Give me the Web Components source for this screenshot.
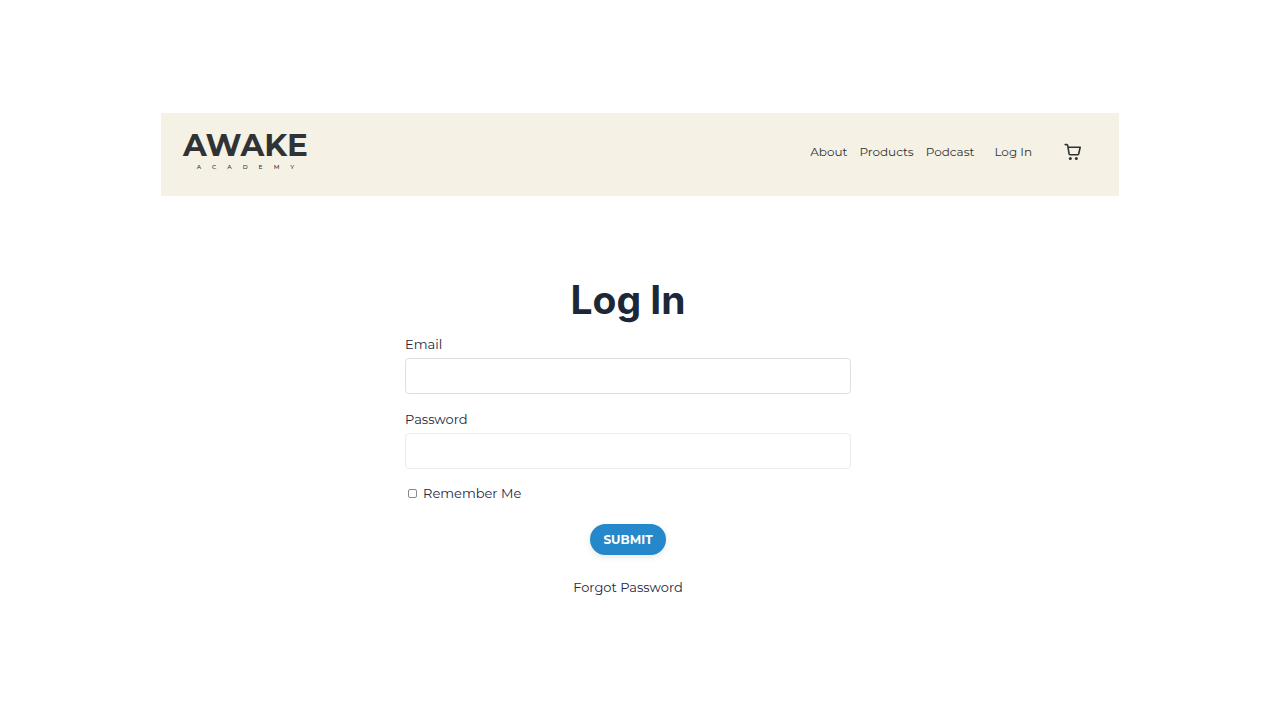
<!DOCTYPE html>
<html lang="en">
<head>
<meta charset="utf-8">
<meta name="viewport" content="width=device-width, initial-scale=1">
<title>Log In | Awake Academy</title>
<style>
  body { margin: 0; background: #fff; color: #1e293b; font-family: Montserrat, Inter, sans-serif; }
</style>
</head>
<body>
<login-page></login-page>

<template id="page-tpl">
  <style>
    :host { display: block; max-width: 958px; margin: 0 auto; padding: 113px 16px 64px; }
    main { display: flex; justify-content: center; padding: 80px 24px 0 0; }
  </style>
  <site-header>
    <nav-link href="#about">About</nav-link>
    <nav-link href="#products">Products</nav-link>
    <nav-link href="#podcast">Podcast</nav-link>
    <nav-link slot="account" href="#login">Log In</nav-link>
  </site-header>
  <main><login-form></login-form></main>
</template>

<template id="header-tpl">
  <style>
    :host { display: block; background: #f5f1e5; color: #303336; }
    header { display: flex; align-items: flex-start; justify-content: space-between; box-sizing: border-box; min-height: 83px; padding: 13px 37px 0 22px; }
    nav { display: flex; align-items: center; height: 52px; }
    .links { display: flex; gap: 12px; margin-right: 20px; }
    .cart { display: flex; margin-left: 32px; color: inherit; }
    svg { display: block; width: 18px; height: 18px; }
  </style>
  <header>
    <brand-logo></brand-logo>
    <nav aria-label="Main">
      <div class="links"><slot></slot></div>
      <slot name="account"></slot>
      <a class="cart" href="#cart" aria-label="Cart">
        <svg viewBox="0 0 18 18" fill="none" stroke="currentColor" stroke-width="1.6" stroke-linejoin="round" stroke-linecap="round" aria-hidden="true">
          <path d="M1.2 1.6h1.6q.8 0 .9.8l1.4 8.4q.2 1 1.2 1h7.2q1 0 1.2-1l1.5-6.6H4"/>
          <circle cx="6.3" cy="15.4" r="1.5" fill="currentColor" stroke="none"/>
          <circle cx="12.3" cy="15.4" r="1.5" fill="currentColor" stroke="none"/>
        </svg>
      </a>
    </nav>
  </header>
</template>

<template id="logo-tpl">
  <style>
    :host { display: block; }
    a { display: flex; flex-direction: column; align-items: center; color: inherit; text-decoration: none; }
    .name { font-size: 31px; line-height: 38px; font-weight: 700; }
    .sub { font-size: 6px; line-height: 6px; font-weight: 500; letter-spacing: 11px; padding-left: 11px; }
  </style>
  <a href="#home"><span class="name">AWAKE</span><span class="sub">ACADEMY</span></a>
</template>

<template id="link-tpl">
  <style>
    :host { display: block; font-size: 12px; line-height: 20px; }
    a { color: inherit; text-decoration: none; }
  </style>
  <a><slot></slot></a>
</template>

<template id="field-tpl">
  <style>
    :host { display: block; margin-bottom: 15px; }
    label { display: block; font-size: 13px; line-height: 20px; margin-bottom: 4px; }
    input { display: block; box-sizing: border-box; width: 100%; height: 36px; padding: 0 12px; border: 1px solid var(--field-border, #dedfe1); border-radius: 4px; background: #fff; font: inherit; font-size: 13px; color: inherit; outline-color: #2588ca; }
  </style>
  <label for="field"></label>
  <input id="field">
</template>

<template id="form-tpl">
  <style>
    :host { display: block; width: 100%; max-width: 446px; }
    form { display: flex; flex-direction: column; }
    h1 { margin: 0 0 10px; font-family: Inter, sans-serif; font-size: 39px; line-height: 48px; font-weight: 700; text-align: center; color: #1c2738; }
    .muted { --field-border: #ececee; margin-bottom: 14px; }
    .remember { display: flex; align-items: center; gap: 6px; padding-left: 3px; font-size: 13px; line-height: 20px; }
    .remember input { appearance: none; box-sizing: border-box; width: 9px; height: 9px; margin: 0; border: 1px solid #85888c; border-radius: 2px; background: #fff; }
    .remember input:checked { background: #2588ca; }
    button { align-self: center; margin: 21px 0 22px; height: 31px; padding: 0 13px; border: 0; border-radius: 16px; background: #2588ca; color: #fff; font: inherit; font-size: 12px; font-weight: 700; box-shadow: 0 2px 6px rgb(0 0 0 / .1); cursor: pointer; }
    .forgot { align-self: center; font-size: 13px; line-height: 20px; color: inherit; text-decoration: none; }
  </style>
  <form>
    <h1>Log In</h1>
    <form-field label="Email" type="email"></form-field>
    <form-field class="muted" label="Password" type="password"></form-field>
    <label class="remember"><input type="checkbox">Remember Me</label>
    <button type="submit">SUBMIT</button>
    <a class="forgot" href="#forgot">Forgot Password</a>
  </form>
</template>

<script>
  class TemplateElement extends HTMLElement {
    constructor() {
      super();
      const tpl = document.getElementById(this.constructor.template);
      this.attachShadow({ mode: "open" }).append(document.importNode(tpl.content, true));
    }
  }
  class BrandLogo extends TemplateElement { static template = "logo-tpl"; }
  class NavLink extends TemplateElement {
    static template = "link-tpl";
    connectedCallback() {
      this.shadowRoot.querySelector("a").href = this.getAttribute("href");
    }
  }
  class FormField extends TemplateElement {
    static template = "field-tpl";
    connectedCallback() {
      this.shadowRoot.querySelector("label").textContent = this.getAttribute("label");
      this.shadowRoot.querySelector("input").type = this.getAttribute("type");
    }
  }
  class SiteHeader extends TemplateElement { static template = "header-tpl"; }
  class LoginForm extends TemplateElement {
    static template = "form-tpl";
    connectedCallback() {
      this.shadowRoot.querySelector("form").addEventListener("submit", e => e.preventDefault());
    }
  }
  class LoginPage extends TemplateElement { static template = "page-tpl"; }
  customElements.define("brand-logo", BrandLogo);
  customElements.define("nav-link", NavLink);
  customElements.define("form-field", FormField);
  customElements.define("site-header", SiteHeader);
  customElements.define("login-form", LoginForm);
  customElements.define("login-page", LoginPage);
</script>
</body>
</html>
